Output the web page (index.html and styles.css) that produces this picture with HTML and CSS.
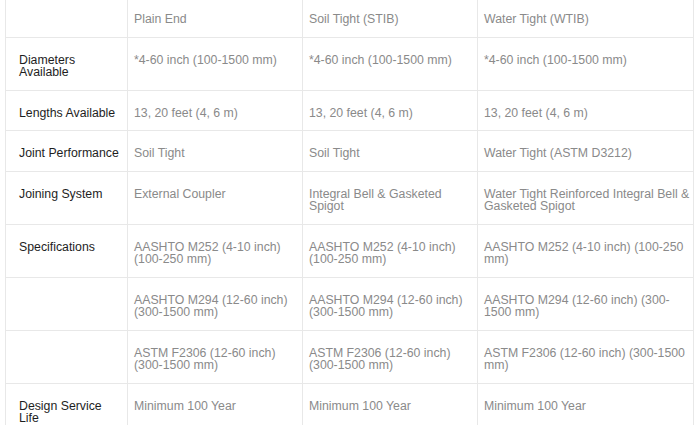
FILE: index.html
```html
<!DOCTYPE html>
<html lang="en">
<head>
<meta charset="utf-8">
<title>Pipe comparison</title>
<link rel="stylesheet" href="styles.css">
</head>
<body>
<table class="spec">
  <colgroup>
    <col class="c-label">
    <col class="c-mid">
    <col class="c-mid">
    <col class="c-last">
  </colgroup>
  <thead>
    <tr class="head">
      <th class="label"></th>
      <th>Plain End</th>
      <th>Soil Tight (STIB)</th>
      <th>Water Tight (WTIB)</th>
    </tr>
  </thead>
  <tbody>
    <tr>
      <th class="label">Diameters Available</th>
      <td>*4-60 inch (100-1500 mm)</td>
      <td>*4-60 inch (100-1500 mm)</td>
      <td>*4-60 inch (100-1500 mm)</td>
    </tr>
    <tr>
      <th class="label">Lengths Available</th>
      <td>13, 20 feet (4, 6 m)</td>
      <td>13, 20 feet (4, 6 m)</td>
      <td>13, 20 feet (4, 6 m)</td>
    </tr>
    <tr>
      <th class="label">Joint Performance</th>
      <td>Soil Tight</td>
      <td>Soil Tight</td>
      <td>Water Tight (ASTM D3212)</td>
    </tr>
    <tr>
      <th class="label">Joining System</th>
      <td>External Coupler</td>
      <td>Integral Bell &amp; Gasketed Spigot</td>
      <td>Water Tight Reinforced Integral Bell &amp; Gasketed Spigot</td>
    </tr>
    <tr>
      <th class="label">Specifications</th>
      <td>AASHTO M252 (4-10 inch) (100-250 mm)</td>
      <td>AASHTO M252 (4-10 inch) (100-250 mm)</td>
      <td>AASHTO M252 (4-10 inch) (100-250 mm)</td>
    </tr>
    <tr>
      <th class="label"></th>
      <td>AASHTO M294 (12-60 inch) (300-1500 mm)</td>
      <td>AASHTO M294 (12-60 inch) (300-1500 mm)</td>
      <td>AASHTO M294 (12-60 inch) (300-1500 mm)</td>
    </tr>
    <tr>
      <th class="label"></th>
      <td>ASTM F2306 (12-60 inch) (300-1500 mm)</td>
      <td>ASTM F2306 (12-60 inch) (300-1500 mm)</td>
      <td>ASTM F2306 (12-60 inch) (300-1500 mm)</td>
    </tr>
    <tr>
      <th class="label">Design Service Life</th>
      <td>Minimum 100 Year</td>
      <td>Minimum 100 Year</td>
      <td>Minimum 100 Year</td>
    </tr>
  </tbody>
</table>
</body>
</html>
```
FILE: styles.css
```css
html, body {
  margin: 0;
  padding: 0;
  background: #ffffff;
}

body {
  font-family: "Liberation Sans", Arial, Helvetica, sans-serif;
  font-size: 12.3px;
  line-height: 12.5px;
  color: #8a8a8a;
  overflow: hidden;
}

.spec {
  margin-left: 5px;
  width: 688px;
  table-layout: fixed;
  border-collapse: separate;
  border-spacing: 0;
  border-left: 1px solid #e8e8e8;
}

.c-label { width: 122px; }
.c-mid { width: 175px; }
.c-last { width: 216px; }

.spec th,
.spec td {
  text-align: left;
  vertical-align: top;
  font-weight: normal;
  padding: 16px 3px 11px 6px;
  border-right: 1px solid #e8e8e8;
  border-bottom: 1px solid #e8e8e8;
}

.spec .head th {
  padding-top: 13px;
  color: #8a8a8a;
}

.spec th.label {
  color: #1e1e1e;
  padding-left: 13px;
  padding-right: 4px;
}
```
